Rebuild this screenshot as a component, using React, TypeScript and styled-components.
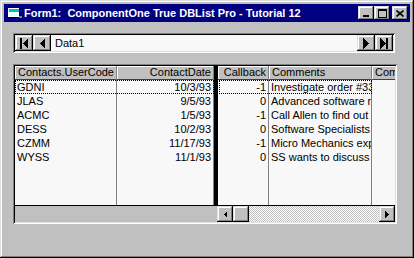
import React from "react";
import styled, { createGlobalStyle } from "styled-components";

const GlobalStyle = createGlobalStyle`
  html, body {
    margin: 0;
    padding: 0;
  }
  body {
    background: #c0c0c0;
    font-family: "Liberation Sans", Arial, sans-serif;
    font-size: 11px;
    color: #000;
  }
`;

const raised = `
  background: #c0c0c0;
  box-shadow: inset -1px -1px #000, inset 1px 1px #dfdfdf,
    inset -2px -2px #808080, inset 2px 2px #fff;
`;

const sunken = `
  box-shadow: inset 1px 1px #808080, inset -1px -1px #fff,
    inset 2px 2px #000, inset -2px -2px #dfdfdf;
`;

const Window = styled.div`
  width: 414px;
  height: 258px;
  box-sizing: border-box;
  padding: 4px;
  ${raised}
  display: flex;
  flex-direction: column;
`;

const TitleBar = styled.div`
  height: 18px;
  background: #000080;
  display: flex;
  align-items: center;
  padding: 0 2px 0 3px;
`;

const TitleText = styled.div`
  flex: 1;
  margin-left: 1px;
  color: #fff;
  font-weight: bold;
  font-size: 11px;
  white-space: nowrap;
`;

const CaptionButton = styled.div<{ gap?: number }>`
  width: 16px;
  height: 14px;
  ${raised}
  display: flex;
  align-items: center;
  justify-content: center;
  margin-left: ${({ gap }) => gap ?? 0}px;
`;

const Content = styled.div`
  display: flex;
  flex-direction: column;
  gap: 11px;
  padding: 11px 0 0 9px;
`;

const Navigator = styled.div`
  width: 382px;
  height: 20px;
  box-sizing: border-box;
  padding: 2px;
  ${sunken}
  display: flex;
`;

const NavButton = styled.div`
  width: 18px;
  height: 16px;
  ${raised}
  display: flex;
  align-items: center;
  justify-content: center;
`;

const NavCaption = styled.div`
  flex: 1;
  background: #f8f8f8;
  padding-left: 4px;
  line-height: 16px;
`;

const Grid = styled.div`
  width: 384px;
  height: 160px;
  box-sizing: border-box;
  padding: 2px;
  ${sunken}
  display: flex;
  flex-direction: column;
`;

const Panes = styled.div`
  height: 140px;
  box-sizing: border-box;
  border-bottom: 1px solid #000;
  display: flex;
`;

const Split = styled.div<{ width: number }>`
  position: relative;
  width: ${({ width }) => width}px;
  flex-shrink: 0;
  display: flex;
  background: #f8f8f8;
  overflow: hidden;
`;

const SplitBar = styled.div`
  width: 4px;
  background: #000;
`;

const Column = styled.div<{ width?: number }>`
  width: ${({ width }) => (width ? `${width}px` : "auto")};
  flex: ${({ width }) => (width ? "0 0 auto" : "1")};
  box-sizing: border-box;
  border-right: 1px solid #808080;
  display: flex;
  flex-direction: column;
`;

const HeaderCell = styled.div<{ align: string }>`
  height: 14px;
  box-sizing: border-box;
  background: #c0c0c0;
  border-bottom: 1px solid #404040;
  box-shadow: inset 1px 1px #fff;
  padding: 0 2px 0 3px;
  line-height: 13px;
  text-align: ${({ align }) => align};
  white-space: nowrap;
  overflow: hidden;
`;

const Cell = styled.div<{ align: string }>`
  height: 14px;
  line-height: 14px;
  padding: 0 2px 0 2px;
  text-align: ${({ align }) => align};
  white-space: nowrap;
  overflow: hidden;
`;

const FocusRect = styled.div<{ left: number; width: number }>`
  position: absolute;
  top: 14px;
  left: ${({ left }) => left}px;
  width: ${({ width }) => width}px;
  height: 14px;
  box-sizing: border-box;
  border: 1px dotted #000;
  pointer-events: none;
`;

const ScrollRow = styled.div`
  height: 16px;
  display: flex;
`;

const ScrollGap = styled.div`
  width: 202px;
  background: #c0c0c0;
`;

const ScrollBar = styled.div`
  flex: 1;
  display: flex;
`;

const ScrollButton = styled.div`
  width: 16px;
  height: 16px;
  ${raised}
  display: flex;
  align-items: center;
  justify-content: center;
`;

const ScrollTrack = styled.div`
  flex: 1;
  background: repeating-conic-gradient(#c0c0c0 0 25%, #fff 0 50%) 0 0 / 2px 2px;
`;

const Glyph: React.FC<{ w: number; h: number; children: React.ReactNode }> = ({
  w,
  h,
  children,
}) => (
  <svg width={w} height={h} viewBox={`0 0 ${w} ${h}`} shapeRendering="crispEdges">
    {children}
  </svg>
);

const contacts = [
  { code: "GDNI", date: "10/3/93", callback: "-1", comment: "Investigate order #3321" },
  { code: "JLAS", date: "9/5/93", callback: "0", comment: "Advanced software request" },
  { code: "ACMC", date: "1/5/93", callback: "-1", comment: "Call Allen to find out when" },
  { code: "DESS", date: "10/2/93", callback: "0", comment: "Software Specialists" },
  { code: "CZMM", date: "11/17/93", callback: "-1", comment: "Micro Mechanics expects" },
  { code: "WYSS", date: "11/1/93", callback: "0", comment: "SS wants to discuss pricing" },
];

const App: React.FC = () => {
  return (
    <>
      <GlobalStyle />
      <Window>
        <TitleBar>
          <svg width="16" height="16" viewBox="0 0 16 16" shapeRendering="crispEdges">
            <rect x="1" y="3" width="12" height="10" fill="#000" />
            <rect x="1" y="3" width="11" height="9" fill="#fff" />
            <rect x="2" y="4" width="10" height="3" fill="#00c0c0" />
            <rect x="2" y="7" width="9" height="4" fill="#e0ffff" />
            <rect x="12" y="11" width="3" height="2" fill="#808080" />
          </svg>
          <TitleText>Form1:&nbsp; ComponentOne True DBList Pro - Tutorial 12</TitleText>
          <CaptionButton>
            <Glyph w={8} h={8}>
              <rect x="1" y="6" width="6" height="2" fill="#000" />
            </Glyph>
          </CaptionButton>
          <CaptionButton>
            <Glyph w={9} h={9}>
              <rect x="0" y="0" width="9" height="2" fill="#000" />
              <rect x="0" y="0" width="1" height="9" fill="#000" />
              <rect x="8" y="0" width="1" height="9" fill="#000" />
              <rect x="0" y="8" width="9" height="1" fill="#000" />
            </Glyph>
          </CaptionButton>
          <CaptionButton gap={2}>
            <svg width="8" height="7" viewBox="0 0 8 7">
              <path d="M0.5 0.5 L7.5 6.5 M7.5 0.5 L0.5 6.5" stroke="#000" strokeWidth="1.6" />
            </svg>
          </CaptionButton>
        </TitleBar>
        <Content>
          <Navigator>
            <NavButton>
              <Glyph w={8} h={11}>
                <rect x="0" y="0" width="2" height="11" fill="#000" />
                <polygon points="8,0 8,11 2.5,5.5" fill="#000" />
              </Glyph>
            </NavButton>
            <NavButton>
              <Glyph w={6} h={11}>
                <polygon points="6,0 6,11 0.5,5.5" fill="#000" />
              </Glyph>
            </NavButton>
            <NavCaption>Data1</NavCaption>
            <NavButton>
              <Glyph w={6} h={11}>
                <polygon points="0,0 0,11 5.5,5.5" fill="#000" />
              </Glyph>
            </NavButton>
            <NavButton>
              <Glyph w={8} h={11}>
                <polygon points="0,0 0,11 5.5,5.5" fill="#000" />
                <rect x="6" y="0" width="2" height="11" fill="#000" />
              </Glyph>
            </NavButton>
          </Navigator>
          <Grid>
            <Panes>
              <Split width={199}>
                <Column width={102}>
                  <HeaderCell align="left">Contacts.UserCode</HeaderCell>
                  {contacts.map((c) => (
                    <Cell key={c.code} align="left">
                      {c.code}
                    </Cell>
                  ))}
                </Column>
                <Column>
                  <HeaderCell align="right">ContactDate</HeaderCell>
                  {contacts.map((c) => (
                    <Cell key={c.code} align="right">
                      {c.date}
                    </Cell>
                  ))}
                </Column>
                <FocusRect left={0} width={199} />
              </Split>
              <SplitBar />
              <Split width={177}>
                <Column width={51}>
                  <HeaderCell align="right">Callback</HeaderCell>
                  {contacts.map((c) => (
                    <Cell key={c.code} align="right">
                      {c.callback}
                    </Cell>
                  ))}
                </Column>
                <Column width={103}>
                  <HeaderCell align="left">Comments</HeaderCell>
                  {contacts.map((c) => (
                    <Cell key={c.code} align="left">
                      {c.comment}
                    </Cell>
                  ))}
                </Column>
                <Column>
                  <HeaderCell align="left">Company</HeaderCell>
                </Column>
                <FocusRect left={1} width={153} />
              </Split>
            </Panes>
            <ScrollRow>
              <ScrollGap />
              <ScrollBar>
                <ScrollButton>
                  <Glyph w={4} h={7}>
                    <polygon points="4,0 4,7 0.5,3.5" fill="#000" />
                  </Glyph>
                </ScrollButton>
                <ScrollButton />
                <ScrollTrack />
                <ScrollButton>
                  <Glyph w={4} h={7}>
                    <polygon points="0,0 0,7 3.5,3.5" fill="#000" />
                  </Glyph>
                </ScrollButton>
              </ScrollBar>
            </ScrollRow>
          </Grid>
        </Content>
      </Window>
    </>
  );
};

export default App;
